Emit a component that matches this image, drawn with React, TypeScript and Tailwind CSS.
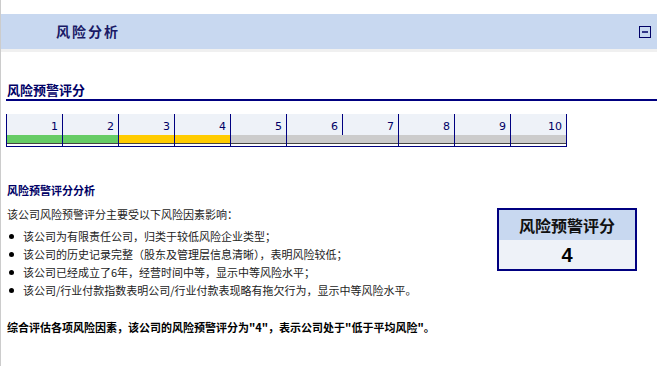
import React from "react";

const scale = [
  { n: 1, bar: "bg-[#66cc66]" },
  { n: 2, bar: "bg-[#66cc66]" },
  { n: 3, bar: "bg-[#ffcc00]" },
  { n: 4, bar: "bg-[#ffcc00]" },
  { n: 5, bar: "bg-[#cccccc]" },
  { n: 6, bar: "bg-[#cccccc]" },
  { n: 7, bar: "bg-[#cccccc]" },
  { n: 8, bar: "bg-[#cccccc]" },
  { n: 9, bar: "bg-[#cccccc]" },
  { n: 10, bar: "bg-[#cccccc]" },
];

const factors = [
  "该公司为有限责任公司，归类于较低风险企业类型；",
  "该公司的历史记录完整（股东及管理层信息清晰），表明风险较低；",
  "该公司已经成立了6年，经营时间中等，显示中等风险水平；",
  "该公司/行业付款指数表明公司/行业付款表现略有拖欠行为，显示中等风险水平。",
];

export default function App() {
  return (
    <div className="min-h-screen w-[657px] bg-white border-l border-[#cccccc] pt-[14px] font-['Noto_Sans_CJK_SC','Noto_Sans',sans-serif] text-black">
      {/* section header */}
      <div className="h-[35px] bg-[#c8d8f0] flex items-center justify-between pl-[55px] pr-[6px]">
        <span className="text-[14px] font-bold tracking-[2px] text-[#1a1a66]">风险分析</span>
        <svg width="12" height="12" viewBox="0 0 12 12">
          <rect x="0.5" y="0.5" width="11" height="11" fill="none" stroke="#000066" />
          <line x1="3" y1="6" x2="9" y2="6" stroke="#000066" strokeWidth="1.5" />
        </svg>
      </div>
      <div className="h-[3px] bg-[#f0f0f0]" />

      {/* risk score */}
      <div className="mt-[30px] ml-[5px] border-b-2 border-[#000080]">
        <div className="h-[17px] leading-[16px] pl-[1px] text-[13px] font-bold text-[#000066]">风险预警评分</div>
      </div>

      <div className="mt-[13px] ml-[5px] flex border-l border-b border-[#000080] w-max font-['DejaVu_Sans',sans-serif]">
        {scale.map((c) => (
          <div
            key={c.n}
            className={c.n === 6 ? "w-[56px] flex flex-col" : "w-[56px] flex flex-col border-r border-[#000080]"}
          >
            <div
              className={
                c.n === 6
                  ? "h-[21px] bg-[#eef2f8] text-right pr-[4px] text-[11px] leading-[26px] text-[#000066] border-r border-[#000080]"
                  : "h-[21px] bg-[#eef2f8] text-right pr-[4px] text-[11px] leading-[26px] text-[#000066]"
              }
            >
              {c.n}
            </div>
            <div className={`h-[8px] ${c.bar}`} />
            <div className="h-[1px] bg-[#444444]" />
            <div className="h-[2px] bg-white" />
          </div>
        ))}
      </div>

      {/* analysis */}
      <div className="mt-[36px] ml-[6px] text-[11px] leading-[14px] font-bold text-[#000066]">风险预警评分分析</div>

      <div className="mt-[8px] flex items-start justify-between pr-[20px]">
        <div className="pl-[6px] text-[11px] text-[#222222]">
          <div className="leading-[18px]">该公司风险预警评分主要受以下风险因素影响：</div>
          <ul className="mt-[4px]">
            {factors.map((f) => (
              <li key={f} className="flex items-center h-[18px]">
                <span className="w-[5px] h-[5px] rounded-full bg-black ml-[2px] mr-[9px]" />
                <span>{f}</span>
              </li>
            ))}
          </ul>
        </div>

        <div className="mt-[3px] w-[140px] border-2 border-[#000080] flex flex-col">
          <div className="h-[30px] bg-[#c8d8f0] flex items-center justify-center text-[16px] font-bold text-[#111111]">
            风险预警评分
          </div>
          <div className="h-[29px] bg-[#eef2f8] flex items-center justify-center text-[20px] font-bold font-['Liberation_Sans',sans-serif]">
            4
          </div>
        </div>
      </div>

      <div className="mt-[19px] ml-[6px] text-[11px] leading-[18px] font-bold">
        综合评估各项风险因素，该公司的风险预警评分为"4"，表示公司处于"低于平均风险"。
      </div>
    </div>
  );
}
